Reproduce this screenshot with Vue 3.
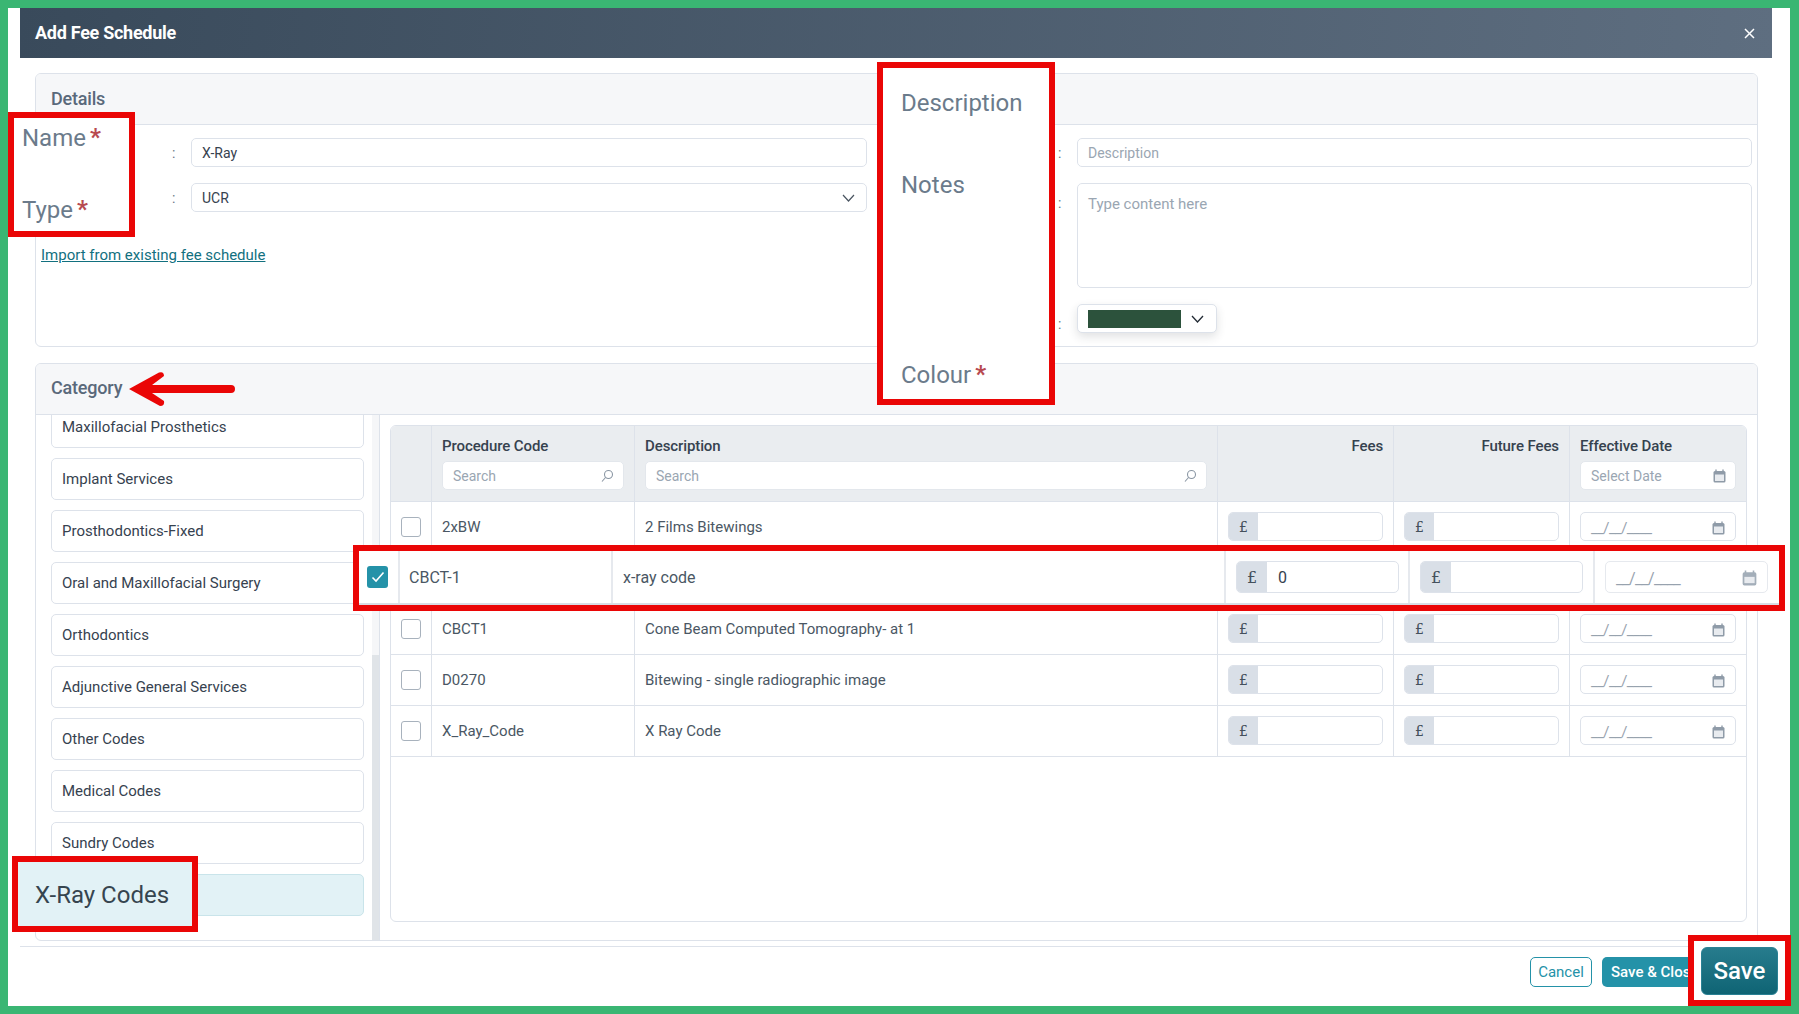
<script setup>
const categories = [
  'Maxillofacial Prosthetics', 'Implant Services', 'Prosthodontics-Fixed', 'Oral and Maxillofacial Surgery',
  'Orthodontics', 'Adjunctive General Services', 'Other Codes', 'Medical Codes', 'Sundry Codes', ''
]
const rows = [
  { code: '2xBW', desc: '2 Films Bitewings' },
  { code: '', desc: '', hidden: true },
  { code: 'CBCT1', desc: 'Cone Beam Computed Tomography- at 1' },
  { code: 'D0270', desc: 'Bitewing - single radiographic image' },
  { code: 'X_Ray_Code', desc: 'X Ray Code' }
]
</script>

<template>
  <div class="page">
    <div class="modal">
      <header class="head">
        <h1>Add Fee Schedule</h1>
        <svg class="close" width="11" height="11" viewBox="0 0 11 11"><path d="M1 1l9 9M10 1l-9 9" stroke="#fff" stroke-width="1.5"/></svg>
      </header>

      <div class="content">
        <section class="card details">
          <div class="card-head">Details</div>
          <div class="details-body">
            <div class="form-col left">
              <div class="field"><span class="colon">:</span><input class="ctl" value="X-Ray" readonly></div>
              <div class="field">
                <span class="colon">:</span>
                <div class="ctl select"><span>UCR</span>
                  <svg width="13" height="8" viewBox="0 0 13 8"><path d="M1 1l5.500 6L12 1" fill="none" stroke="#4a5561" stroke-width="1.200"/></svg>
                </div>
              </div>
              <a class="link">Import from existing fee schedule</a>
            </div>
            <div class="form-col right">
              <div class="field"><span class="colon">:</span><input class="ctl" placeholder="Description" readonly></div>
              <div class="field top"><span class="colon">:</span><div class="ctl area">Type content here</div></div>
              <div class="field">
                <span class="colon low">:</span>
                <div class="ctl colour">
                  <span class="swatch"></span>
                  <svg width="13" height="8" viewBox="0 0 13 8"><path d="M1 1l5.500 6L12 1" fill="none" stroke="#222b35" stroke-width="1.300"/></svg>
                </div>
              </div>
            </div>
          </div>
        </section>

        <section class="card category">
          <div class="card-head cat-title">Category</div>
          <div class="cat-body">
            <div class="cat-list">
              <div v-for="(c, i) in categories" :key="i" class="cat" :class="{ active: i === 9 }">{{ c }}</div>
            </div>
            <div class="scroll"><div class="thumb"></div></div>
            <div class="table-wrap">
              <div class="table">
                <div class="tr thead">
                  <div class="td"></div>
                  <div class="td stack"><b>Procedure Code</b>
                    <div class="filter"><span>Search</span>
                      <svg width="14" height="14" viewBox="0 0 14 14"><circle cx="8.500" cy="5.500" r="4" fill="none" stroke="#8b97a4" stroke-width="1.100"/><path d="M5.500 8.500L2 12.500" stroke="#8b97a4" stroke-width="1.100"/></svg>
                    </div>
                  </div>
                  <div class="td stack"><b>Description</b>
                    <div class="filter"><span>Search</span>
                      <svg width="14" height="14" viewBox="0 0 14 14"><circle cx="8.500" cy="5.500" r="4" fill="none" stroke="#8b97a4" stroke-width="1.100"/><path d="M5.500 8.500L2 12.500" stroke="#8b97a4" stroke-width="1.100"/></svg>
                    </div>
                  </div>
                  <div class="td stack end"><b>Fees</b></div>
                  <div class="td stack end"><b>Future Fees</b></div>
                  <div class="td stack"><b>Effective Date</b>
                    <div class="filter date-filter"><span>Select Date</span>
                      <svg width="13" height="14" viewBox="0 0 13 14"><path d="M3 0.500v3M10 0.500v3" stroke="#8f9ba8" stroke-width="1.400"/><rect x="0.500" y="2" width="12" height="11.500" rx="1.500" fill="#8f9ba8"/><rect x="2" y="5.500" width="9" height="6.500" fill="#e8ebef"/></svg>
                    </div>
                  </div>
                </div>
                <div v-for="(r, i) in rows" :key="i" class="tr body">
                  <template v-if="!r.hidden">
                    <div class="td"><span class="check"></span></div>
                    <div class="td">{{ r.code }}</div>
                    <div class="td">{{ r.desc }}</div>
                    <div class="td"><div class="money"><i>£</i><span></span></div></div>
                    <div class="td"><div class="money"><i>£</i><span></span></div></div>
                    <div class="td">
                      <div class="date"><span>__/__/____</span>
                        <svg width="13" height="14" viewBox="0 0 13 14"><path d="M3 0.500v3M10 0.500v3" stroke="#8f9ba8" stroke-width="1.400"/><rect x="0.500" y="2" width="12" height="11.500" rx="1.500" fill="#8f9ba8"/><rect x="2" y="5.500" width="9" height="6.500" fill="#e8ebef"/></svg>
                      </div>
                    </div>
                  </template>
                </div>
              </div>
            </div>
          </div>
        </section>
      </div>

      <footer class="foot">
        <button class="btn ghost">Cancel</button>
        <button class="btn solid">Save &amp; Close</button>
      </footer>
    </div>

    <div class="mark mark-name">
      <div class="big">Name<em>*</em></div>
      <div class="big">Type<em>*</em></div>
    </div>
    <div class="mark mark-desc">
      <div class="big">Description</div>
      <div class="big">Notes</div>
      <div class="big">Colour<em>*</em></div>
    </div>
    <svg class="arrow" width="110" height="38" viewBox="0 0 110 38">
      <path d="M1 19L31 2.500Q36 1 36 6L24 15H103a4 4 0 0 1 0 8H24L36 31Q37 36 32 36Z" fill="#ea0606"/>
    </svg>
    <div class="mark mark-row">
      <div class="td"><span class="check on">
        <svg width="14" height="12" viewBox="0 0 14 12"><path d="M1.500 6.500l3.500 3.500 7.500-8.500" fill="none" stroke="#fff" stroke-width="1.600"/></svg>
      </span></div>
      <div class="td">CBCT-1</div>
      <div class="td">x-ray code</div>
      <div class="td"><div class="money"><i>£</i><span>0</span></div></div>
      <div class="td"><div class="money"><i>£</i><span></span></div></div>
      <div class="td">
        <div class="date"><span>__/__/____</span>
          <svg width="15" height="16" viewBox="0 0 13 14"><path d="M3 0.500v3M10 0.500v3" stroke="#a3aeb9" stroke-width="1.400"/><rect x="0.500" y="2" width="12" height="11.500" rx="1.500" fill="#a3aeb9"/><rect x="2" y="6" width="9" height="5.500" fill="#e8ebef"/></svg>
        </div>
      </div>
    </div>
    <div class="mark mark-xray">X-Ray Codes</div>
    <div class="mark mark-save"><button class="btn-save">Save</button></div>
  </div>
</template>

<style>
html, body { margin: 0; }
</style>

<style scoped>
* { box-sizing: border-box; }
.page {
  position: relative;
  width: 1799px;
  height: 1014px;
  padding: 8px 9px 8px 8px;
  background: #3ab673;
  font-family: Roboto, "Liberation Sans", sans-serif;
  font-size: 14px;
  color: #4a5764;
  overflow: hidden;
}
.modal {
  display: flex;
  flex-direction: column;
  height: 100%;
  background: #fff;
  padding: 0 18px 0 12px;
}
.head {
  flex: none;
  height: 50px;
  display: flex;
  align-items: center;
  justify-content: space-between;
  padding: 0 16px 0 15px;
  background: linear-gradient(95deg, #394a5b, #5e6e80);
}
.head h1 {
  margin: 0 0 1px;
  font-size: 18px;
  font-weight: 700;
  color: #fff;
  letter-spacing: -0.28px;
}
.close { margin-top: 1px; margin-right: 1px; }
.content {
  flex: none;
  display: flex;
  flex-direction: column;
  gap: 16px;
  padding: 15px 14px 0 15px;
}
.card {
  border: 1px solid #dde2ea;
  border-radius: 6px;
  background: #fff;
  overflow: hidden;
}
.details { height: 274px; }
.category { height: 578px; }
.card-head {
  height: 51px;
  display: flex;
  align-items: center;
  padding-left: 15px;
  padding-bottom: 1px;
  background: #f6f7f9;
  border-bottom: 1px solid #dde2ea;
  font-size: 18px;
  font-weight: 500;
  color: #5a697b;
  letter-spacing: -0.2px;
}
.cat-title { padding-bottom: 3px; }
.details-body {
  display: flex;
  padding-top: 13px;
}
.form-col { display: flex; flex-direction: column; gap: 16px; }
.form-col.left { width: 1017px; padding: 0 186px 0 136px; position: relative; }
.form-col.right { width: 699px; padding-left: 5px; }
.field { display: flex; align-items: center; }
.field.top { align-items: flex-start; }
.colon { width: 19px; color: #6b7785; flex: none; }
.field.top .colon { padding-top: 12px; }
.colon.low { padding-top: 10px; }
.ctl {
  flex: 1;
  min-width: 0;
  height: 29px;
  border: 1px solid #dde2ea;
  border-radius: 5px;
  padding: 0 10px;
  background: #fff;
  font: inherit;
  color: #36424f;
  outline: none;
}
.ctl::placeholder { color: #9aa6b2; opacity: 1; }
.select { display: flex; align-items: center; justify-content: space-between; padding-right: 11px; }
.area { height: 105px; padding-top: 11px; color: #9aa6b2; font-size: 15px; }
.colour {
  flex: none;
  width: 140px;
  display: flex;
  align-items: center;
  justify-content: space-between;
  padding: 0 12px 0 10px;
  box-shadow: 0 4px 10px rgba(40, 50, 60, 0.14);
}
.swatch { width: 93px; height: 18px; background: #2c523c; }
.link {
  position: absolute;
  left: 5px;
  top: 108px;
  font-size: 15px;
  color: #12707f;
  text-decoration: underline;
}
.cat-body { display: flex; height: 526px; }
.cat-list {
  flex: none;
  width: 336px;
  height: 100%;
  padding: 0 8px 0 15px;
  overflow: hidden;
  display: flex;
  flex-direction: column;
  gap: 10px;
}
.cat {
  flex: none;
  height: 42px;
  display: flex;
  align-items: center;
  padding-left: 10px;
  border: 1px solid #dde2ea;
  border-radius: 5px;
  font-size: 15px;
  color: #36424f;
}
.cat:first-child { margin-top: -9px; }
.cat.active { background: #e2f2f6; border-color: #c9e4ea; }
.scroll {
  flex: none;
  width: 8px;
  height: 100%;
  background: #f5f6f8;
  border-right: 1px solid #dde2ea;
  position: relative;
}
.thumb { position: absolute; left: 0; right: 0; bottom: 0; height: 286px; background: #e0e4e8; }
.table-wrap { flex: 1; padding: 10px 10px 0 10px; }
.table {
  height: 497px;
  border: 1px solid #dde2ea;
  border-radius: 6px;
  overflow: hidden;
}
.tr {
  display: grid;
  grid-template-columns: 40px 203px 583px 176px 176px 1fr;
}
.td {
  display: flex;
  align-items: center;
  min-width: 0;
  padding: 0 10px;
  border-left: 1px solid #dde2ea;
  font-size: 15px;
}
.td:first-child { border-left: 0; }
.thead { height: 76px; background: #eaedf0; border-bottom: 1px solid #dde2ea; }
.stack {
  flex-direction: column;
  align-items: stretch;
  justify-content: flex-start;
  padding-top: 11px;
  gap: 6px;
}
.stack.end { align-items: flex-end; }
.stack b { font-weight: 500; font-size: 15px; color: #36424f; line-height: 18px; letter-spacing: -0.1px; }
.filter {
  height: 29px;
  display: flex;
  align-items: center;
  justify-content: space-between;
  padding: 0 9px 0 10px;
  background: #fff;
  border: 1px solid #e3e7ec;
  border-radius: 5px;
  font-size: 14px;
  color: #9aa6b2;
}
.date-filter { padding-right: 9px; }
.body { height: 51px; border-bottom: 1px solid #dde2ea; }
.body .td { padding-bottom: 1px; }
.check {
  width: 20px;
  height: 20px;
  border: 1px solid #a8b2bd;
  border-radius: 3px;
  background: #fff;
  flex: none;
}
.money {
  display: flex;
  width: 155px;
  height: 29px;
  border: 1px solid #dde2ea;
  border-radius: 5px;
  overflow: hidden;
}
.money i {
  flex: none;
  width: 29px;
  display: flex;
  align-items: center;
  justify-content: center;
  background: #d9dfe7;
  font-family: "DejaVu Serif", serif;
  font-style: normal;
  font-size: 14px;
  color: #44505c;
}
.money span { padding-left: 12px; align-self: center; }
.date {
  flex: 1;
  height: 29px;
  display: flex;
  align-items: center;
  justify-content: space-between;
  padding: 2px 10px 0 10px;
  border: 1px solid #dde2ea;
  border-radius: 5px;
  color: #97a2ae;
  letter-spacing: -0.6px;
}
.foot {
  flex: none;
  margin-top: 5px;
  height: 60px;
  border-top: 1px solid #dde2ea;
  display: flex;
  justify-content: flex-end;
  align-items: flex-start;
  gap: 10px;
  padding: 10px 60px 0 0;
}
.btn {
  height: 30px;
  border-radius: 5px;
  font: inherit;
  font-size: 15px;
  padding: 0;
}
.ghost { width: 62px; background: #fff; border: 1px solid #2492a8; color: #2492a8; }
.solid { width: 110px; background: #2492a8; border: 0; color: #fff; font-weight: 500; text-align: left; padding-left: 9px; }

.mark {
  position: absolute;
  border: 6px solid #ea0606;
  background: #fff;
  z-index: 2;
}
.big { font-size: 24px; line-height: 28px; color: #6b7b8b; }
.big em { color: #b84a50; font-style: normal; font-weight: 700; margin-left: 4px; position: relative; top: -1px; }
.mark-name {
  left: 8px;
  top: 112px;
  width: 127px;
  height: 125px;
  padding: 6px 0 0 8px;
  display: flex;
  flex-direction: column;
  gap: 44px;
}
.mark-desc {
  left: 877px;
  top: 62px;
  width: 178px;
  height: 343px;
  padding: 21px 0 0 18px;
  display: flex;
  flex-direction: column;
}
.mark-desc .big:nth-child(2) { margin-top: 54px; }
.mark-desc .big:nth-child(3) { margin-top: 162px; }
.arrow { position: absolute; left: 128px; top: 370px; z-index: 2; }
.mark-row {
  left: 353px;
  top: 545px;
  width: 1432px;
  height: 66px;
  display: grid;
  grid-template-columns: 39px 213px 613px 184px 185px 1fr;
  box-shadow: inset 0 -2px 0 #d8dde4;
}
.mark-row .td { font-size: 16px; padding: 0 10px; border-left: 2px solid #e6e9ee; height: 52px; }
.mark-row .td:nth-child(2) { padding-left: 9px; }
.mark-row .td:first-child { border-left: 0; padding: 0 0 0 8px; }
.mark-row .check { width: 21px; height: 22px; border: 0; border-radius: 3px; background: #2492a8; display: flex; align-items: center; justify-content: center; }
.mark-row .money { flex: none; width: 163px; height: 32px; }
.mark-row .money i { width: 30px; font-size: 16px; }
.mark-row .money span { padding-left: 11px; color: #36424f; }
.mark-row .date { height: 32px; padding: 2px 10px 0 10px; letter-spacing: -0.7px; border-color: #e6e9ee; flex: none; width: 163px; }
.mark-xray {
  left: 12px;
  top: 856px;
  width: 186px;
  height: 76px;
  padding: 2px 0 0 17px;
  display: flex;
  align-items: center;
  background: #e2f2f6;
  font-size: 24px;
  color: #36454f;
}
.mark-save {
  left: 1688px;
  top: 935px;
  width: 103px;
  height: 71px;
  padding: 6px 0 0 7px;
}
.btn-save {
  width: 77px;
  height: 48px;
  border: 1px solid #2a8194;
  border-radius: 6px;
  background: linear-gradient(#277c8d, #0f6474);
  color: #fff;
  font: inherit;
  font-size: 24px;
  font-weight: 500;
  padding: 0;
}
</style>
